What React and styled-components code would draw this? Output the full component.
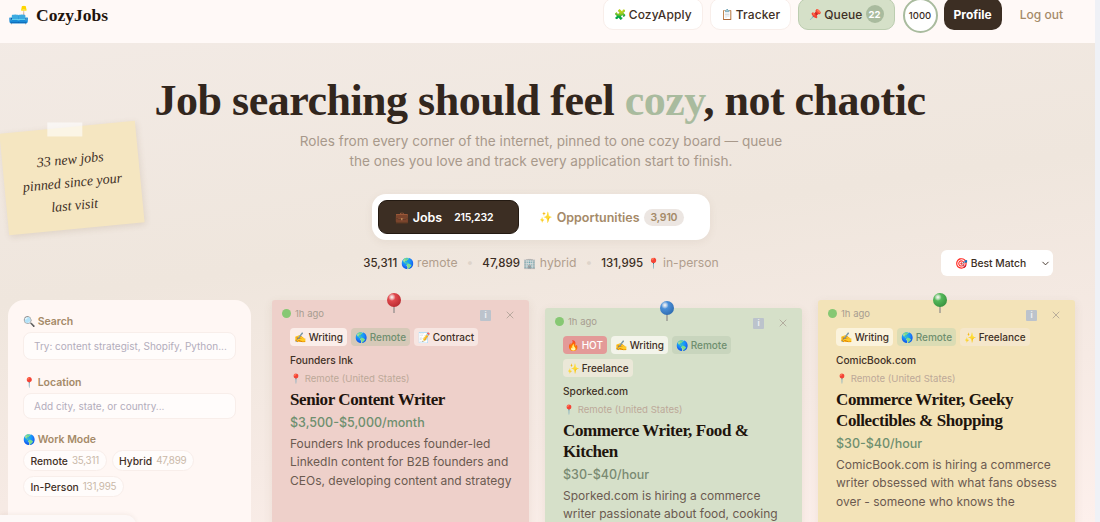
import React from 'react';
import styled, { createGlobalStyle } from 'styled-components';
import { X, ChevronDown } from 'lucide-react';

const sans = `Inter, "Noto Sans", "Liberation Sans", sans-serif`;
const serif = `"Liberation Serif", "DejaVu Serif", serif`;

const GlobalStyle = createGlobalStyle`
  html, body { margin: 0; height: 100%; overflow: hidden; }
  body { font-family: ${sans}; color: #3b2d23; }
  * { box-sizing: border-box; }
`;

const Shell = styled.div`
  position: relative;
  display: flex;
  width: 1100px;
  height: 522px;
  overflow: hidden;
`;

const Main = styled.div`
  flex: 1;
  min-width: 0;
  background: linear-gradient(172deg, #f3ebe6 0%, #efe6dd 45%, #f6eae4 75%, #fdf0ec 100%);
`;

const Rail = styled.div`
  width: 5px;
  background: #eff1f6;
`;

const Header = styled.header`
  display: flex;
  align-items: flex-start;
  justify-content: space-between;
  height: 43px;
  padding: 0 32px 0 8px;
  background: #fff9f7;
  overflow: hidden;
`;

const Logo = styled.div`
  display: flex;
  align-items: center;
  gap: 7px;
  height: 30px;
  font-family: ${serif};
  font-size: 17.5px;
  font-weight: 700;
  color: #1e140d;
`;

const Sofa = styled.span`
  font-size: 17px;
`;

const Glyph = styled.span`
  font-size: ${p => p.$size || 10}px;
`;

const Nav = styled.nav`
  display: flex;
  align-items: center;
  gap: 7px;
  height: 32px;
  margin-top: -2px;
`;

const NavButton = styled.div`
  display: flex;
  align-items: center;
  gap: 3px;
  height: 32px;
  padding: 0 10px;
  border-radius: 10px;
  font-size: 12px;
  font-weight: 500;
  letter-spacing: 0.1px;
  white-space: nowrap;
  color: #3f3026;
  background: ${p => (p.$active ? '#d5e0c8' : '#ffffff')};
  border: 1px solid ${p => (p.$active ? '#bccdb0' : '#f8eeea')};
`;

const Count = styled.span`
  display: flex;
  align-items: center;
  justify-content: center;
  width: 18px;
  height: 18px;
  border-radius: 50%;
  background: #a9bb9e;
  color: #fff;
  font-size: 9.5px;
  font-weight: 700;
`;

const Timer = styled.div`
  display: flex;
  align-items: center;
  justify-content: center;
  width: 35px;
  height: 35px;
  margin: 2px -1px 0 1px;
  border-radius: 50%;
  background: #fff;
  border: 2px solid #a9bb9e;
  font-size: 9.5px;
  font-weight: 500;
`;

const ProfileButton = styled.div`
  display: flex;
  align-items: center;
  height: 32px;
  padding: 0 10px;
  border-radius: 10px;
  background: #3c2e23;
  color: #fff;
  font-size: 12px;
  font-weight: 700;
`;

const LogOut = styled.span`
  margin-left: 11px;
  font-size: 12px;
  font-weight: 500;
  color: #a58a68;
`;

const Content = styled.div`
  padding: 0 20px 0 8px;
`;

const Hero = styled.section`
  display: flex;
  flex-direction: column;
  align-items: center;
  padding: 30px 1px 0 0;
`;

const Title = styled.h1`
  margin: 0 2px 0 0;
  font-family: ${serif};
  font-size: 44px;
  letter-spacing: -0.5px;
  line-height: 56px;
  font-weight: 700;
  color: #32261d;
  white-space: nowrap;
`;

const Accent = styled.span`
  color: #a9bb9e;
`;

const Subtitle = styled.p`
  margin: 2px 0 0;
  max-width: 500px;
  font-size: 13.6px;
  line-height: 20px;
  text-align: center;
  color: #a8998b;
`;

const Tabs = styled.div`
  display: flex;
  align-items: center;
  width: 338px;
  height: 46px;
  margin-top: 23px;
  padding: 6px;
  border-radius: 14px;
  background: #fff;
  box-shadow: 0 2px 8px rgba(120, 90, 60, 0.08);
`;

const Tab = styled.div`
  display: flex;
  align-items: center;
  justify-content: center;
  gap: 4px;
  flex: ${p => (p.$active ? '0 0 141px' : '1')};
  height: 34px;
  padding-right: ${p => (p.$active ? 7 : 0)}px;
  border-radius: 9px;
  font-size: 12.5px;
  font-weight: 600;
  color: ${p => (p.$active ? '#fff' : '#a58a68')};
  background: ${p => (p.$active ? '#3c2e23' : 'transparent')};
  border: ${p => (p.$active ? '1px solid #241a12' : 'none')};
`;

const TabCount = styled.span`
  margin-left: ${p => (p.$active ? 6 : 0)}px;
  padding: 2px ${p => (p.$active ? 2 : 7)}px;
  border-radius: 10px;
  font-size: 10.5px;
  letter-spacing: -0.2px;
  color: ${p => (p.$active ? '#fff' : '#a58a68')};
  background: ${p => (p.$active ? 'transparent' : '#ece6e2')};
`;

const StatsRow = styled.div`
  display: grid;
  grid-template-columns: 1fr auto 1fr;
  align-items: center;
  width: 100%;
  height: 26px;
  margin-top: 10px;
`;

const Stats = styled.div`
  grid-column: 2;
  display: flex;
  align-items: center;
  gap: 9px;
  margin-bottom: 2px;
  font-size: 12.2px;
  color: #b09e8d;
`;

const Stat = styled.span`
  b {
    font-size: 11.5px;
    font-weight: 500;
    color: #3b2d23;
  }
`;

const Dot = styled.span`
  color: #ded4ca;
`;

const SortSelect = styled.div`
  justify-self: end;
  display: flex;
  align-items: center;
  justify-content: space-between;
  width: 112px;
  height: 26px;
  margin-right: 21px;
  padding: 0 2px 0 14px;
  border-radius: 6px;
  background: #fff;
  font-size: 10.3px;
  font-weight: 500;
  white-space: nowrap;
`;

const Note = styled.aside`
  position: absolute;
  left: 4px;
  top: 127px;
  display: flex;
  align-items: center;
  justify-content: center;
  width: 136px;
  height: 102px;
  padding: 8px 10px 0;
  background: #f5e6c1;
  box-shadow: 1px 2px 6px rgba(120, 90, 60, 0.14);
  transform: rotate(-5.5deg);
  font-family: ${serif};
  font-style: italic;
  font-size: 14px;
  line-height: 23px;
  text-align: center;
  color: #3f3026;
`;

const Tape = styled.span`
  position: absolute;
  left: 48px;
  top: -5px;
  width: 35px;
  height: 14px;
  background: rgba(255, 255, 255, 0.6);
  transform: rotate(5.5deg);
`;

const Board = styled.div`
  display: grid;
  grid-template-columns: 243px 1fr;
  gap: 21px;
  margin-top: 24px;
`;

const Sidebar = styled.aside`
  height: 260px;
  padding: 14px 15px;
  border-radius: 16px;
  background: #fff7f4;
`;

const Label = styled.div`
  height: 14px;
  margin-top: ${p => p.$gap || 0}px;
  font-size: 10.5px;
  font-weight: 600;
  line-height: 14px;
  color: #a58a68;
`;

const Field = styled.div`
  display: flex;
  align-items: center;
  height: ${p => p.$height}px;
  margin-top: 4px;
  padding: 0 10px;
  border-radius: 8px;
  background: #fffcfb;
  border: 1px solid #f8eeea;
  font-size: 10px;
  color: #b3adbb;
  white-space: nowrap;
  overflow: hidden;
`;

const Chips = styled.div`
  display: flex;
  flex-wrap: wrap;
  gap: 5px;
  margin-top: 4px;
`;

const Chip = styled.div`
  display: flex;
  align-items: center;
  gap: 4px;
  height: 21px;
  padding: 0 6.5px;
  border-radius: 11px;
  background: #fffcfb;
  border: 1px solid #f8eeea;
  font-size: 10.3px;
  font-weight: 500;
  color: #3f3026;
  span {
    font-size: 9.8px;
    font-weight: 400;
    letter-spacing: -0.2px;
    color: #c9b8a8;
  }
`;

const Cards = styled.div`
  display: grid;
  grid-template-columns: repeat(3, 257px);
  gap: 16px;
  align-items: start;
`;

const Card = styled.article`
  position: relative;
  height: 240px;
  margin-top: ${p => p.$drop || 0}px;
  padding: 6px 10px;
  border-radius: 3px;
  background: ${p => p.$bg};
  box-shadow: 0 3px 10px rgba(120, 90, 60, 0.1);
`;

const Pin = styled.svg`
  position: absolute;
  left: 114px;
  top: -8px;
  width: 16px;
  height: 24px;
`;

const CardTop = styled.div`
  display: flex;
  align-items: center;
  justify-content: space-between;
  height: 14px;
  padding-right: 3px;
`;

const Posted = styled.span`
  display: flex;
  align-items: center;
  gap: 4px;
  font-size: 9.5px;
  color: #a79c90;
`;

const Live = styled.i`
  width: 9px;
  height: 9px;
  border-radius: 50%;
  background: #86c873;
`;

const CardActions = styled.span`
  display: flex;
  align-items: center;
  gap: 13px;
  margin-top: 4px;
  color: #a79c90;
`;

const InfoBox = styled.span`
  display: flex;
  align-items: center;
  justify-content: center;
  width: 11px;
  height: 11px;
  border-radius: 1px;
  background: #bcc3cc;
  color: #eef0f2;
  font-size: 8px;
  font-weight: 700;
`;

const CardBody = styled.div`
  padding: 0 4px 0 8px;
`;

const TagRow = styled.div`
  display: flex;
  flex-wrap: wrap;
  gap: 5px 4px;
  margin-top: 8px;
`;

const Tag = styled.span`
  display: flex;
  align-items: center;
  height: 18px;
  padding: 0 4px;
  border-radius: 4px;
  font-size: 10px;
  font-weight: 500;
  white-space: nowrap;
  color: ${p => p.$color || '#3f3026'};
  background: ${p => p.$bg};
`;

const Company = styled.div`
  margin-top: 7px;
  font-size: 10.2px;
  font-weight: 500;
  line-height: 14px;
  color: #3f3026;
`;

const Place = styled.div`
  margin-top: 5px;
  font-size: 9.6px;
  line-height: 14px;
  color: #bda999;
`;

const JobTitle = styled.h3`
  margin: 3px 0 0;
  font-family: ${serif};
  font-size: 17px;
  letter-spacing: -0.4px;
  font-weight: 700;
  line-height: 21px;
  color: #1e140d;
`;

const Salary = styled.div`
  margin-top: 4px;
  font-size: 12.5px;
  font-weight: 500;
  line-height: 18px;
  color: ${p => p.$color || '#6f8f6f'};
`;

const Blurb = styled.p`
  margin: 3px 0 0;
  font-size: 12px;
  line-height: 18.4px;
  color: #6b5a50;
`;

const Cookie = styled.div`
  position: absolute;
  left: 0;
  top: 515px;
  width: 136px;
  height: 20px;
  border-radius: 0 10px 0 0;
  background: #fdf8f7;
  box-shadow: 0 -1px 4px rgba(120, 90, 60, 0.08);
`;

const PushPin = ({ color, shade }) => (
  <Pin viewBox="0 0 16 24">
    <defs>
      <radialGradient id={`pin-${color}`} cx="35%" cy="30%" r="75%">
        <stop offset="0%" stopColor="#ffffff" stopOpacity="0.6" />
        <stop offset="35%" stopColor={color} />
        <stop offset="100%" stopColor={shade} />
      </radialGradient>
    </defs>
    <rect x="7.4" y="13" width="1.2" height="8" fill="#8d8a88" />
    <circle cx="8" cy="8" r="7" fill={`url(#pin-${color})`} />
  </Pin>
);

const jobs = [
  {
    bg: '#eed0ca',
    pin: ['#e0484c', '#b82a30'],
    tags: [
      { text: '✍️ Writing', bg: '#fbeeea' },
      { text: '🌎 Remote', bg: '#d6c9b8', color: '#6f8f6f' },
      { text: '📝 Contract', bg: '#f7e6e2' },
    ],
    company: 'Founders Ink',
    title: 'Senior Content Writer',
    salary: '$3,500-$5,000/month',
    blurb: 'Founders Ink produces founder-led LinkedIn content for B2B founders and CEOs, developing content and strategy',
  },
  {
    bg: '#d6e0c9',
    drop: 8,
    pin: ['#4a8fd8', '#2f6cb0'],
    tags: [
      { text: '🔥 HOT', bg: '#e39a98', color: '#fff' },
      { text: '✍️ Writing', bg: '#f3f4ea' },
      { text: '🌎 Remote', bg: '#c8d5bd', color: '#6f8f6f' },
      { text: '✨ Freelance', bg: '#ebe8d8' },
    ],
    company: 'Sporked.com',
    title: 'Commerce Writer, Food & Kitchen',
    salary: '$30-$40/hour',
    salaryColor: '#7a8a72',
    blurb: 'Sporked.com is hiring a commerce writer passionate about food, cooking',
  },
  {
    bg: '#f3e3b8',
    pin: ['#55b85a', '#38923e'],
    tags: [
      { text: '✍️ Writing', bg: '#fbf3dc' },
      { text: '🌎 Remote', bg: '#dbdcb4', color: '#6f8f6f' },
      { text: '✨ Freelance', bg: '#f5e7cb' },
    ],
    company: 'ComicBook.com',
    title: 'Commerce Writer, Geeky Collectibles & Shopping',
    salary: '$30-$40/hour',
    blurb: 'ComicBook.com is hiring a commerce writer obsessed with what fans obsess over - someone who knows the',
  },
];

const JobCard = ({ job }) => (
  <Card $bg={job.bg} $drop={job.drop}>
    <PushPin color={job.pin[0]} shade={job.pin[1]} />
    <CardTop>
      <Posted><Live />1h ago</Posted>
      <CardActions>
        <InfoBox>i</InfoBox>
        <X size={12} strokeWidth={1.5} />
      </CardActions>
    </CardTop>
    <CardBody>
      <TagRow>
        {job.tags.map(tag => (
          <Tag key={tag.text} $bg={tag.bg} $color={tag.color}>{tag.text}</Tag>
        ))}
      </TagRow>
      <Company>{job.company}</Company>
      <Place>📍 Remote (United States)</Place>
      <JobTitle>{job.title}</JobTitle>
      <Salary $color={job.salaryColor}>{job.salary}</Salary>
      <Blurb>{job.blurb}</Blurb>
    </CardBody>
  </Card>
);

const App = () => (
  <Shell>
    <GlobalStyle />
    <Main>
      <Header>
        <Logo><Sofa>🛋️</Sofa>CozyJobs</Logo>
        <Nav>
          <NavButton><Glyph>🧩</Glyph> CozyApply</NavButton>
          <NavButton><Glyph>📋</Glyph> Tracker</NavButton>
          <NavButton $active><Glyph>📌</Glyph> Queue <Count>22</Count></NavButton>
          <Timer>1000</Timer>
          <ProfileButton>Profile</ProfileButton>
          <LogOut>Log out</LogOut>
        </Nav>
      </Header>
      <Content>
        <Hero>
          <Title>Job searching should feel <Accent>cozy</Accent>, not chaotic</Title>
          <Subtitle>
            Roles from every corner of the internet, pinned to one cozy board — queue
            the ones you love and track every application start to finish.
          </Subtitle>
          <Tabs>
            <Tab $active><Glyph $size={11}>💼</Glyph> Jobs <TabCount $active>215,232</TabCount></Tab>
            <Tab><Glyph $size={11}>✨</Glyph> Opportunities <TabCount>3,910</TabCount></Tab>
          </Tabs>
          <StatsRow>
            <Stats>
              <Stat><b>35,311</b> <Glyph $size={10.5}>🌎</Glyph> remote</Stat>
              <Dot>•</Dot>
              <Stat><b>47,899</b> <Glyph $size={10.5}>🏢</Glyph> hybrid</Stat>
              <Dot>•</Dot>
              <Stat><b>131,995</b> <Glyph $size={10.5}>📍</Glyph> in-person</Stat>
            </Stats>
            <SortSelect>🎯 Best Match <ChevronDown size={11} /></SortSelect>
          </StatsRow>
        </Hero>
        <Board>
          <Sidebar>
            <Label><Glyph>🔍</Glyph> Search</Label>
            <Field $height={28}>Try: content strategist, Shopify, Python...</Field>
            <Label $gap={15}><Glyph>📍</Glyph> Location</Label>
            <Field $height={26}>Add city, state, or country...</Field>
            <Label $gap={13}><Glyph>🌎</Glyph> Work Mode</Label>
            <Chips>
              <Chip>Remote <span>35,311</span></Chip>
              <Chip>Hybrid <span>47,899</span></Chip>
              <Chip>In-Person <span>131,995</span></Chip>
            </Chips>
          </Sidebar>
          <Cards>
            {jobs.map(job => (
              <JobCard key={job.company} job={job} />
            ))}
          </Cards>
        </Board>
      </Content>
    </Main>
    <Rail />
    <Note>
      <Tape />
      33 new jobs<br />pinned since your<br />last visit
    </Note>
    <Cookie />
  </Shell>
);

export default App;
